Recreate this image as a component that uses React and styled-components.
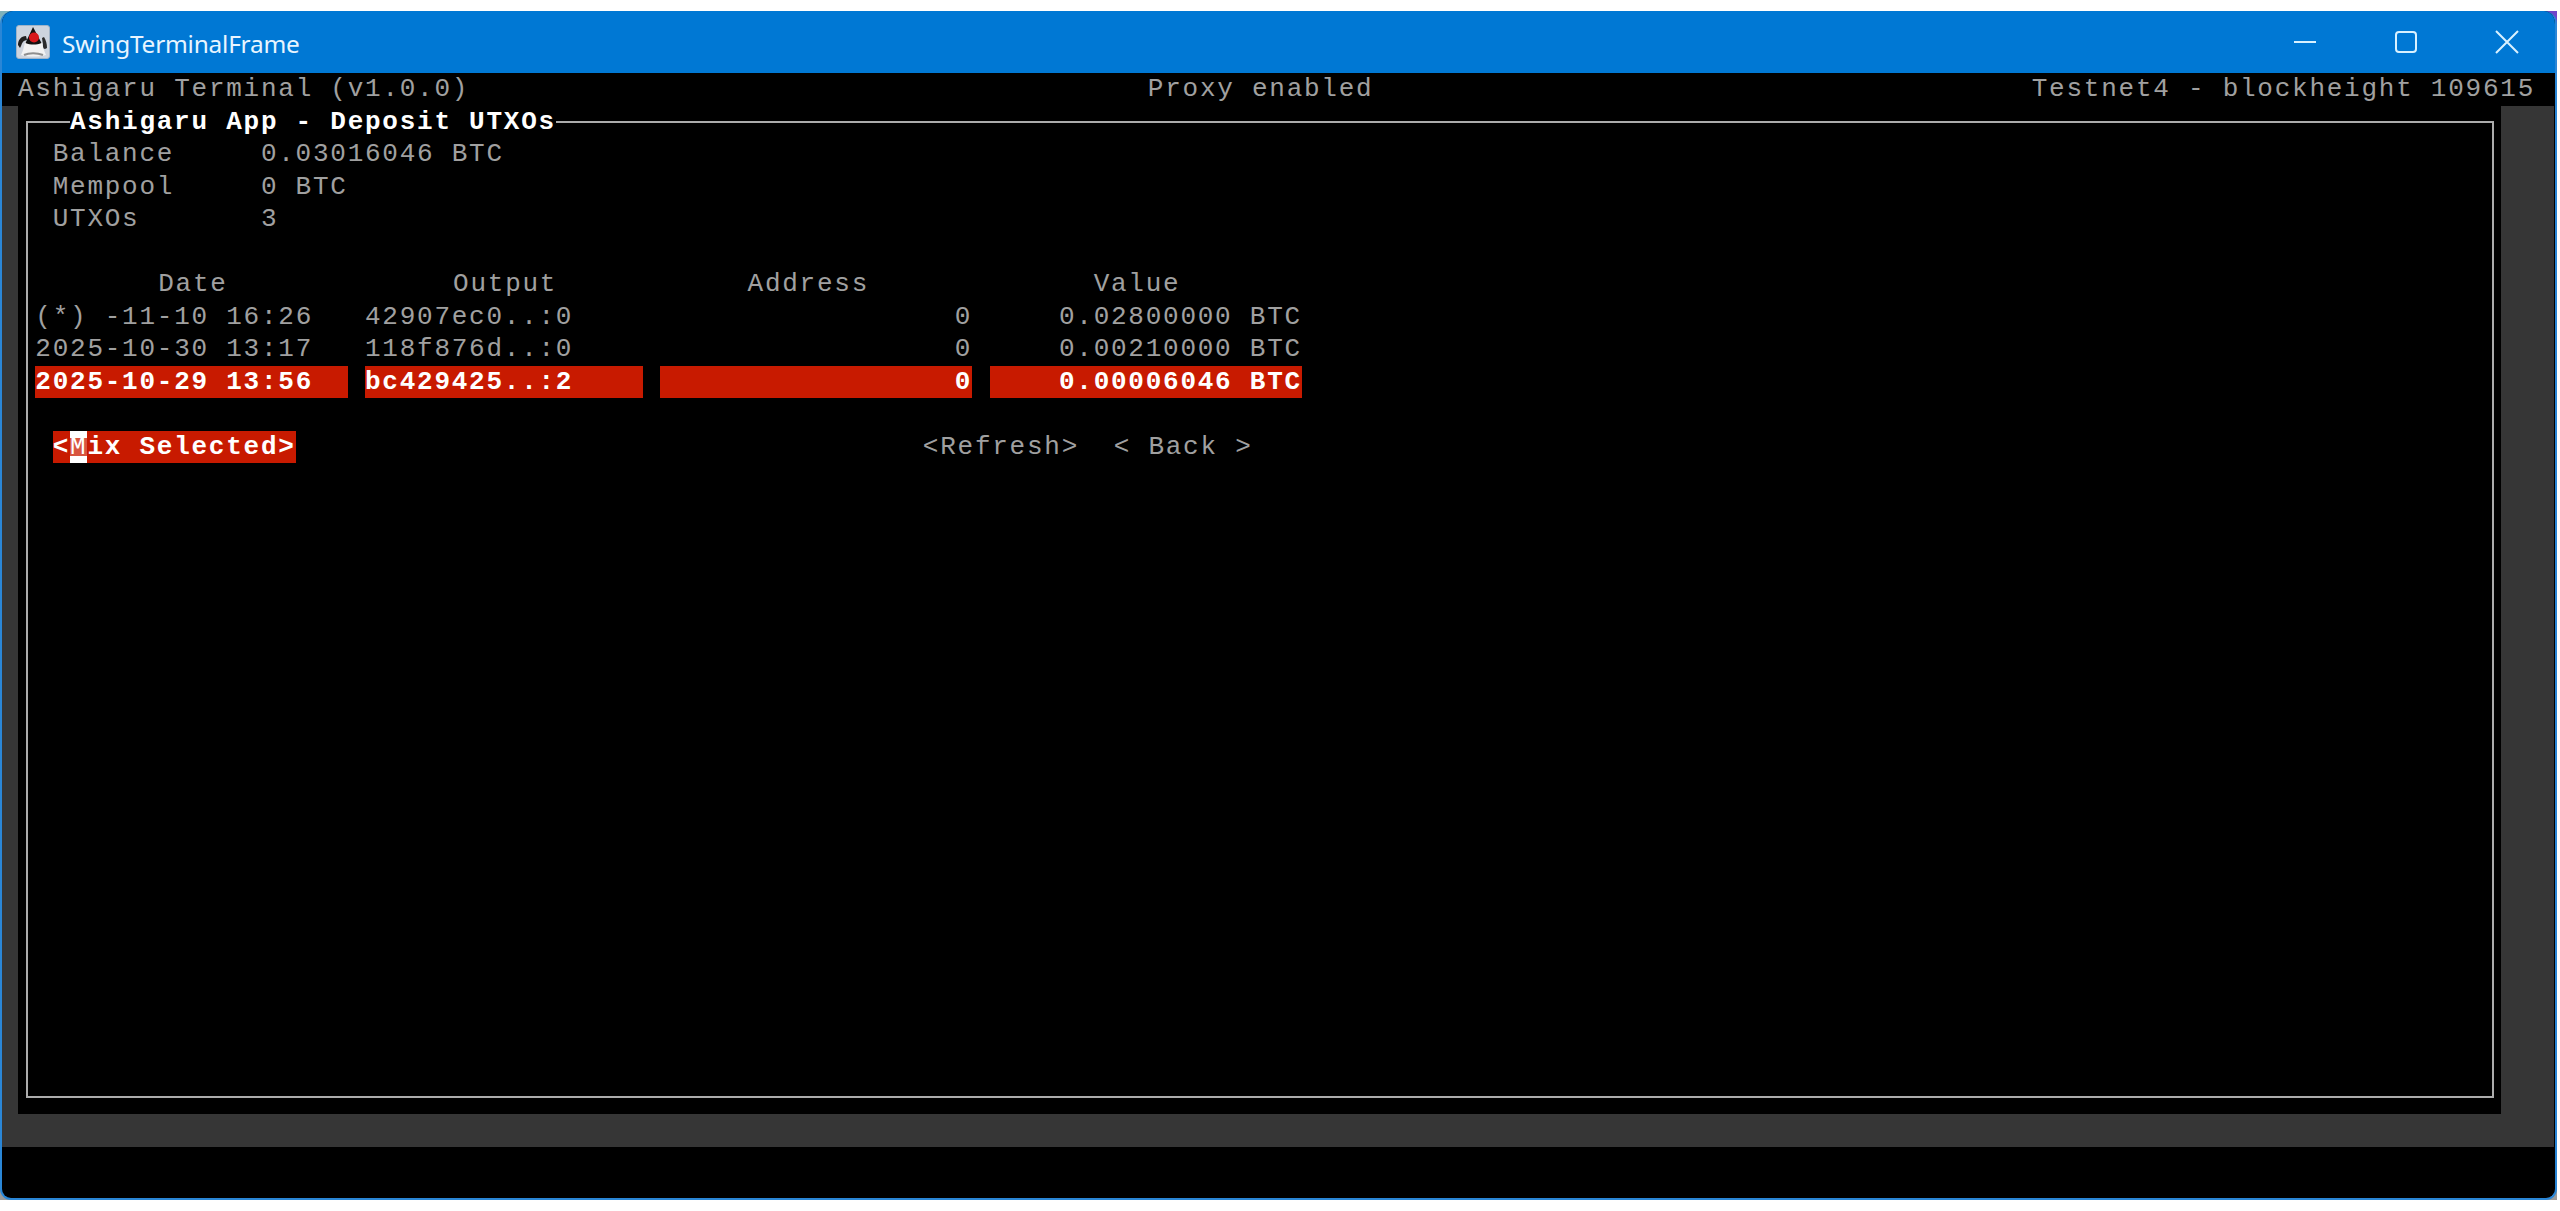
import React from "react";
import styled, { createGlobalStyle } from "styled-components";

const CH = 17.35;
const ROW = 32.5;
const cols = (n) => `${(n * CH).toFixed(2)}px`;

const Global = createGlobalStyle`
  html, body { margin: 0; padding: 0; background: #fff; overflow: hidden; }
  #root { width: 2560px; height: 1211px; }
`;

const Desk = styled.div`
  width: 2557px;
  height: 1189px;
  margin-top: 11px;
  background:
    linear-gradient(to right, #7fb2bb 0 50%, #6f45c8 50% 100%) top / 100% 50% no-repeat,
    #9a9a9a;
`;

const Win = styled.div`
  box-sizing: border-box;
  height: 100%;
  display: flex;
  flex-direction: column;
  border: solid #2a86d6;
  border-width: 0 2px 2px 2px;
  border-radius: 13px 13px 11px 11px;
  overflow: hidden;
  background: #000;
`;

const TitleBar = styled.header`
  flex: none;
  height: 62px;
  margin: 0 -2px;
  padding-left: 16px;
  display: flex;
  align-items: center;
  background: #0078d4;
  color: #e8f5ff;
`;

const AppIcon = styled.svg`
  width: 34px;
  height: 34px;
  flex: none;
`;

const TitleText = styled.span`
  margin-left: 12px;
  padding-top: 2px;
  font: 400 24.4px "Noto Sans", sans-serif;
  letter-spacing: -0.2px;
  flex: 1;
`;

const WinButton = styled.span`
  width: 101px;
  display: flex;
  justify-content: center;
  align-items: center;
`;

const WinIcon = styled.svg`
  width: 24px;
  height: 24px;
  fill: none;
  stroke: #d9f1ff;
  stroke-width: 2;
`;

const Terminal = styled.main`
  flex: 1;
  display: flex;
  flex-direction: column;
  font: 400 26px/${ROW}px "Liberation Mono", monospace;
  letter-spacing: ${CH - 15.6}px;
  color: #a0a0a0;
  white-space: pre;
`;

const StatusBar = styled.div`
  flex: none;
  height: ${ROW}px;
  padding: 0 20px 0 16px;
  display: grid;
  grid-template-columns: ${cols(65.12)} ${cols(13)} 1fr;
`;

const StatusRight = styled.span`
  text-align: right;
`;

const Backdrop = styled.div`
  flex: none;
  height: 1041.5px;
  box-sizing: border-box;
  padding: 0 53px 33px 16px;
  display: flex;
  background: #363636;
  margin-right: 1px;
`;

const Screen = styled.div`
  flex: 1;
  display: flex;
  background: #000;
  padding: 15.5px 7.5px 16px 8px;
`;

const Frame = styled.section`
  position: relative;
  flex: 1;
  box-sizing: border-box;
  border: 2px solid #ababab;
  padding: 15px 0 0 7.35px;
`;

const Legend = styled.h1`
  position: absolute;
  left: 42px;
  top: -17.25px;
  margin: 0;
  font: inherit;
  font-weight: 700;
  color: #fff;
  background: #000;
`;

const InfoRow = styled.div`
  height: ${ROW}px;
  padding-left: ${cols(1)};
  display: grid;
  grid-template-columns: ${cols(12)} 1fr;
`;

const Table = styled.div`
  margin-top: ${ROW}px;
`;

const TableRow = styled.div`
  height: ${ROW}px;
  display: grid;
  grid-template-columns: ${cols(18)} ${cols(16)} ${cols(18)} ${cols(18)};
  column-gap: ${cols(1)};
  color: ${(p) => (p.$selected ? "#fff" : "inherit")};
  font-weight: ${(p) => (p.$selected ? 700 : 400)};
`;

const Cell = styled.span`
  background: ${(p) => (p.$selected ? "#c81a00" : "transparent")};
  text-align: ${(p) => (p.$end ? "right" : "left")};
  padding-left: ${(p) => cols(p.$indent || 0)};
`;

const ButtonBar = styled.div`
  margin-top: ${ROW}px;
  height: ${ROW}px;
  display: flex;
`;

const TermButton = styled.span`
  margin-left: ${(p) => cols(p.$skip)};
  background: ${(p) => (p.$focused ? "#c81a00" : "transparent")};
  color: ${(p) => (p.$focused ? "#fff" : "inherit")};
  font-weight: ${(p) => (p.$focused ? 700 : 400)};
`;

const Cursor = styled.span`
  display: inline-block;
  background: linear-gradient(#fff 0 22%, #d8553f 22% 78%, #fff 78% 100%);
  color: #fff;
  font-weight: 400;
`;

const Duke = () => (
  <AppIcon viewBox="0 0 34 34">
    <rect x="0.5" y="0.5" width="33" height="33" rx="2.5" fill="#cdd4de" stroke="#9fb4c9" />
    <path d="M2 20c0-5 3-9 8-9l1 4c-3 0-5 2-6 6l-1 2z" fill="#1f1f1f" />
    <path d="M31 23c0-4-1-8-3-11l-2 1 1 7-1 3 3 1z" fill="#2b2b2b" />
    <path d="M9 17h17c1 5 2 9 4 13-8 2-18 2-25 0 2-4 3-8 4-13z" fill="#f2f2f2" />
    <path d="M17 2 9.500 18c5 2 11 2 16 0z" fill="#111" />
    <circle cx="18" cy="12.500" r="5" fill="#d8171b" />
    <path d="M8 30c5-2.500 13-2.500 19 0" fill="none" stroke="#8f8f8f" strokeWidth="2" />
  </AppIcon>
);

const rows = [
  { date: "(*) -11-10 16:26", out: "42907ec0..:0", value: "0.02800000 BTC" },
  { date: "2025-10-30 13:17", out: "118f876d..:0", value: "0.00210000 BTC" },
  { date: "2025-10-29 13:56", out: "bc429425..:2", value: "0.00006046 BTC", selected: true },
];

export default function App() {
  return (
    <>
      <Global />
      <Desk>
        <Win>
          <TitleBar>
            <Duke />
            <TitleText>SwingTerminalFrame</TitleText>
            <WinButton>
              <WinIcon viewBox="0 0 24 24"><path d="M1 12h22" /></WinIcon>
            </WinButton>
            <WinButton>
              <WinIcon viewBox="0 0 24 24"><rect x="2" y="2" width="20" height="20" rx="3" /></WinIcon>
            </WinButton>
            <WinButton>
              <WinIcon viewBox="0 0 24 24"><path d="M1 1l22 22M23 1 1 23" /></WinIcon>
            </WinButton>
          </TitleBar>
          <Terminal>
            <StatusBar>
              <span>Ashigaru Terminal (v1.0.0)</span>
              <span>Proxy enabled</span>
              <StatusRight>Testnet4 - blockheight 109615</StatusRight>
            </StatusBar>
            <Backdrop>
              <Screen>
                <Frame>
                  <Legend>Ashigaru App - Deposit UTXOs</Legend>
                  <InfoRow><span>Balance</span><span>0.03016046 BTC</span></InfoRow>
                  <InfoRow><span>Mempool</span><span>0 BTC</span></InfoRow>
                  <InfoRow><span>UTXOs</span><span>3</span></InfoRow>
                  <Table>
                    <TableRow>
                      <Cell $indent={7.08}>Date</Cell>
                      <Cell $indent={5.08}>Output</Cell>
                      <Cell $indent={5.05}>Address</Cell>
                      <Cell $indent={6}>Value</Cell>
                    </TableRow>
                    {rows.map((r) => (
                      <TableRow key={r.out} $selected={r.selected}>
                        <Cell $selected={r.selected}>{r.date}</Cell>
                        <Cell $selected={r.selected}>{r.out}</Cell>
                        <Cell $selected={r.selected} $end>0</Cell>
                        <Cell $selected={r.selected} $end>{r.value}</Cell>
                      </TableRow>
                    ))}
                  </Table>
                  <ButtonBar>
                    <TermButton $skip={1} $focused>&lt;<Cursor>M</Cursor>ix Selected&gt;</TermButton>
                    <TermButton $skip={36.15}>&lt;Refresh&gt;</TermButton>
                    <TermButton $skip={2}>&lt; Back &gt;</TermButton>
                  </ButtonBar>
                </Frame>
              </Screen>
            </Backdrop>
          </Terminal>
        </Win>
      </Desk>
    </>
  );
}
